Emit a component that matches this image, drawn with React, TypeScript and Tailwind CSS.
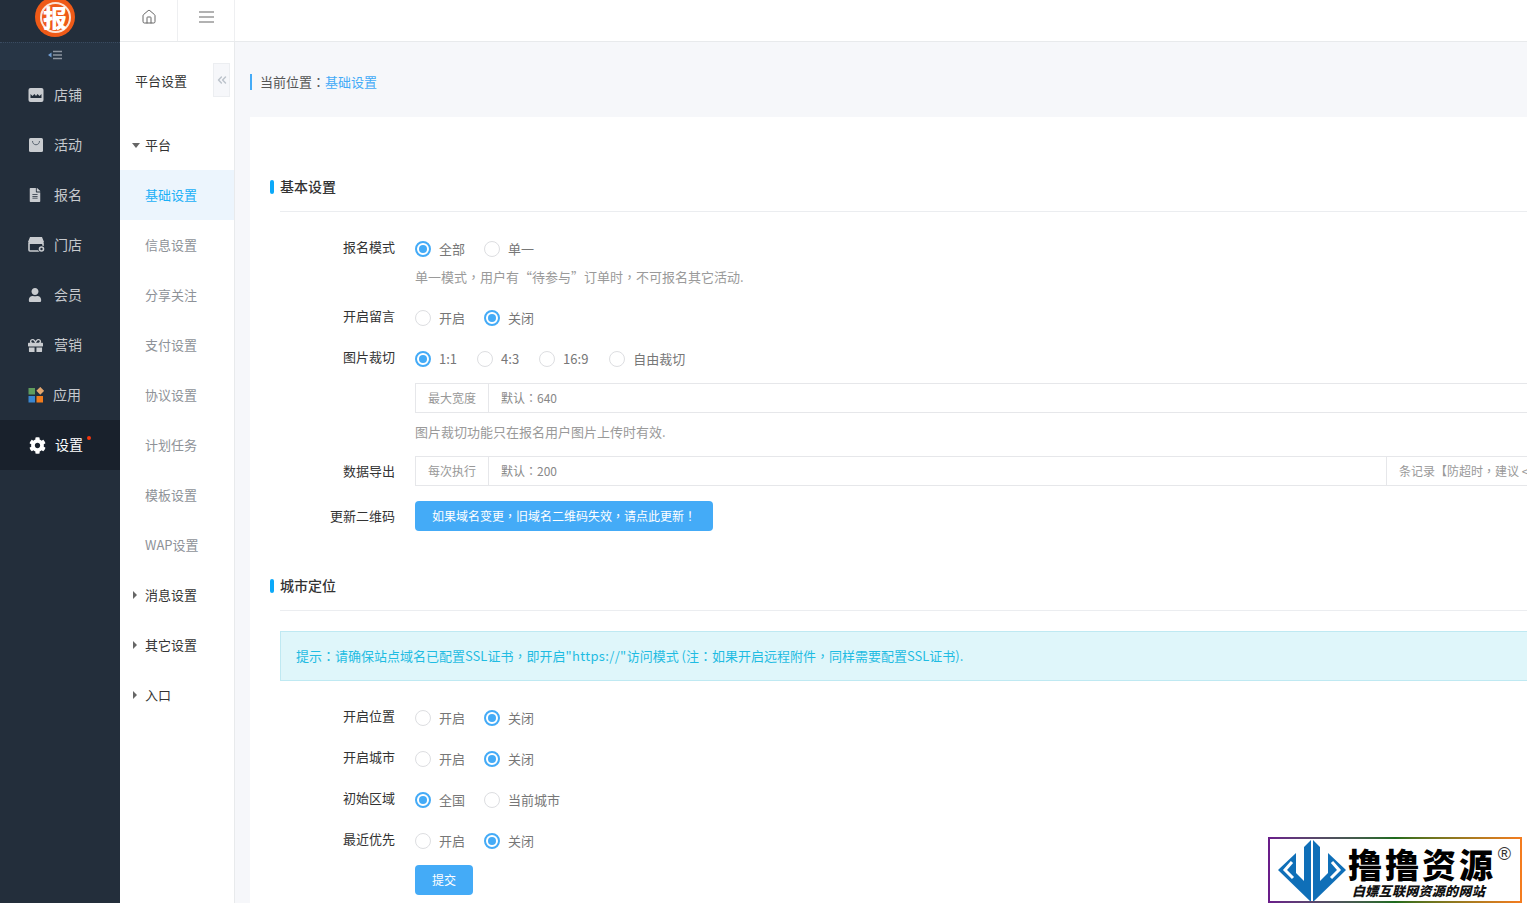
import React from "react";
import { Home, ChevronsLeft } from "lucide-react";
import { FaCog, FaFileAlt, FaUser, FaGift } from "react-icons/fa";

const font = { fontFamily: '"Noto Sans CJK SC","Noto Sans",sans-serif' };

// Full-width punctuation sits in the middle of its cell in the reference.
function T({ children }: { children: string }) {
  return (
    <>
      {children.split(/([，：！])/).map((p, i) =>
        /^[，：！]$/.test(p) ? (
          <span key={i} style={{ fontFamily: '"Noto Sans CJK TC",sans-serif' }}>{p}</span>
        ) : (
          <React.Fragment key={i}>{p}</React.Fragment>
        )
      )}
    </>
  );
}

const ShopIcon = () => (
  <svg width="16" height="14" viewBox="0 0 16 14">
    <rect x="0.5" y="0" width="15" height="14" rx="2" fill="#c9ccd0" />
    <path d="M2.5 6 l2 2 2-2 1.5 2 1.5-2 2 2 2-2 V10 H2.5 Z" fill="#222d3a" />
  </svg>
);
const BagIcon = () => (
  <svg width="16" height="14" viewBox="0 0 16 14">
    <rect x="1" y="0" width="14" height="14" rx="1.5" fill="#c9ccd0" />
    <path d="M4.5 3 C4.5 8 11.5 8 11.5 3" fill="none" stroke="#5a6470" strokeWidth="1" />
  </svg>
);
const StoreIcon = () => (
  <svg width="18" height="16" viewBox="0 0 18 16">
    <path d="M2 0 H14 L16 5 H0 Z" fill="#c9ccd0" />
    <rect x="1" y="5" width="14" height="9" rx="1" fill="none" stroke="#c9ccd0" strokeWidth="1.6" />
    <rect x="1" y="5" width="14" height="2" fill="#c9ccd0" />
    <circle cx="13.5" cy="12" r="3.4" fill="#222d3a" />
    <circle cx="13.5" cy="12" r="2" fill="none" stroke="#c9ccd0" strokeWidth="1.6" />
  </svg>
);
const AppIcon = () => (
  <svg width="16" height="16" viewBox="0 0 16 16">
    <rect x="0.5" y="1" width="6.5" height="6.5" fill="#5f9c5e" />
    <rect x="9.5" y="1" width="5.5" height="5.5" fill="#e3a76f" transform="rotate(45 12.2 3.8)" />
    <rect x="0.5" y="9" width="6.5" height="6.5" fill="#3a86d0" />
    <rect x="8.5" y="9" width="6.5" height="6.5" fill="#f27c1c" />
  </svg>
);

const mainMenu = [
  { t: "店铺", i: <ShopIcon /> },
  { t: "活动", i: <BagIcon /> },
  { t: "报名", i: <FaFileAlt size={14} color="#c9ccd0" /> },
  { t: "门店", i: <StoreIcon /> },
  { t: "会员", i: <FaUser size={14} color="#c9ccd0" /> },
  { t: "营销", i: <FaGift size={15} color="#c9ccd0" /> },
  { t: "应用", i: <AppIcon /> },
];

const subItems = ["信息设置", "分享关注", "支付设置", "协议设置", "计划任务", "模板设置", "WAP设置"];

function Radio({ on, label, cls }: { on?: boolean; label: string; cls?: string }) {
  return (
    <span className={`flex items-center ${cls ?? ""}`}>
      {on ? (
        <span className="flex h-4 w-4 items-center justify-center rounded-full border-2 border-[#44abf7]">
          <span className="h-2 w-2 rounded-full bg-[#44abf7]" />
        </span>
      ) : (
        <span className="h-4 w-4 rounded-full border border-[#dddee1]" />
      )}
      <span className="ml-2 text-[#777]">{label}</span>
    </span>
  );
}

function Row({ label, cls, gap, labelCls, children }: { label?: string; cls?: string; gap?: string; labelCls?: string; children: React.ReactNode }) {
  return (
    <div className={`flex items-center ${cls ?? ""}`}>
      <div className={`w-[145px] shrink-0 text-right text-[#333] ${labelCls ?? "-translate-y-0.5"}`}>{label}</div>
      <div className={`ml-5 flex min-w-0 flex-1 items-center ${gap ?? "gap-[19px]"}`}>{children}</div>
    </div>
  );
}

function Heading({ children, cls }: { children: React.ReactNode; cls?: string }) {
  return (
    <div className={cls}>
      <div className="relative ml-[30px] border-b border-[#ebedf0] pb-[14px]">
        <span className="absolute left-[-10px] top-[3px] h-[14px] w-1 rounded-sm bg-[#0ba9f9]" />
        <div className="h-5 text-sm font-medium leading-[18px] text-[#333]">{children}</div>
      </div>
    </div>
  );
}

function InputGroup({ addon, placeholder, tail, cls }: { addon: string; placeholder: string; tail?: string; cls?: string }) {
  return (
    <Row cls={cls} label={tail ? "数据导出" : ""} labelCls="mt-0">
      <div className="flex h-[30px] flex-1 items-center border border-[#e6e7ea] text-xs text-[#999]">
        <span className="flex h-full w-[73px] shrink-0 items-center justify-center border-r border-[#e6e7ea]">{addon}</span>
        <span className="flex-1 pl-3 text-[#888]"><T>{placeholder}</T></span>
        {tail && <span className="flex h-full w-[363px] shrink-0 items-center border-l border-[#e6e7ea] pl-3"><span className="whitespace-nowrap"><T>{tail}</T></span></span>}
      </div>
    </Row>
  );
}

function Watermark() {
  return (
    <div className="absolute left-[1268px] top-[837px] h-[66px] w-[254px] bg-gradient-to-r from-[#6a1b8a] via-[#1d6b1d] to-[#f57c1f] p-[2px]">
      <div className="relative h-full w-full overflow-hidden bg-white">
        <svg width="90" height="68" viewBox="0 0 90 68" className="absolute left-[-2px] top-[-4px]">
          <g fill="#0f6fb8">
            <path d="M43 5 L36 12 V46 L28 38 V18 L10 35 L43 67 Z" />
            <path d="M45 5 L52 12 V46 L60 38 V18 L78 35 L45 67 Z" />
          </g>
          <g fill="none" stroke="#fff" strokeWidth="3">
            <path d="M24 27 L17 35 L25 43" />
            <path d="M64 27 L71 35 L63 43" />
          </g>
        </svg>
        <div className="absolute left-[78px] top-[8px] whitespace-nowrap text-[34px] font-black leading-[34px] tracking-[3px] text-black">撸撸资源</div>
        <div className="absolute right-[9px] top-[6px] font-['Liberation_Sans'] text-lg leading-[18px] text-[#333]">®</div>
        <div className="absolute left-[82px] top-[44px] whitespace-nowrap text-[13px] font-black italic leading-4 tracking-[0.3px] text-[#111]">白嫖互联网资源的网站</div>
      </div>
    </div>
  );
}

export default function App() {
  return (
    <div className="relative flex h-[903px] w-[1527px] overflow-hidden bg-[#f6f7fa] text-[13px] leading-[22px]" style={font}>
      {/* main sidebar */}
      <aside className="flex w-[120px] shrink-0 flex-col bg-[#232e3b]">
        <div className="flex h-[42px] justify-center overflow-hidden pr-[10px]">
          <div className="-mt-[3px] flex h-10 w-10 items-center justify-center rounded-full bg-[#ef5a17]">
            <div className="flex h-[31px] w-[31px] items-center justify-center rounded-full border-2 border-[#fbe3d6]">
              <span className="text-[24px] font-black leading-none text-white">报</span>
            </div>
          </div>
        </div>
        <div className="flex h-7 items-center justify-center border-t border-dotted border-[#3a4b60] bg-[#273545] pb-1 pr-[10px]">
          <svg width="14" height="10" viewBox="0 0 14 10">
            <path d="M0 5 L3.5 2.5 V7.5 Z" fill="#6f9bd0" />
            <path d="M5 1.5 H14 M5 5 H14 M5 8.5 H14" stroke="#8d95a0" strokeWidth="1.4" />
          </svg>
        </div>
        {mainMenu.map((m) => (
          <div key={m.t} className="flex h-[50px] items-center pl-[28px] text-sm text-[#c6c9cd]">
            <span className={`flex shrink-0 items-center ${m.t === "应用" ? "w-[25px]" : "w-[26px]"}`}>{m.i}</span>
            <span className="mb-0.5">{m.t}</span>
          </div>
        ))}
        <div className="flex h-[50px] items-center bg-[#19212c] pl-[29px] text-sm text-white">
          <span className="flex w-[26px] shrink-0 items-center"><FaCog size={17} color="#fff" /></span>
          <span className="relative mb-0.5">
            设置
            <span className="absolute right-[-8px] top-[2px] h-1 w-1 rounded-full bg-[#f6360e]" />
          </span>
        </div>
      </aside>

      <div className="flex min-w-0 flex-1 flex-col">
        {/* top bar */}
        <header className="flex h-[42px] shrink-0 border-b border-[#e8eaec] bg-white">
          <div className="flex w-[58px] items-center justify-center border-r border-[#eeeff1]">
            <Home size={16} color="#666" strokeWidth={1.5} className="mb-[7px]" />
          </div>
          <div className="flex w-[57px] items-center justify-center border-r border-[#eeeff1]">
            <svg width="15" height="12" viewBox="0 0 15 12" className="mb-2">
              <path d="M0 1 H15 M0 6 H15 M0 11 H15" stroke="#999" strokeWidth="1.6" />
            </svg>
          </div>
        </header>

        <div className="flex min-h-0 flex-1">
          {/* sub sidebar */}
          <nav className="flex w-[115px] shrink-0 flex-col border-r border-[#e8eaec] bg-white">
            <div className="flex h-[78px] items-center justify-between pl-[15px] pr-1">
              <span className="text-[#333]">平台设置</span>
              <span className="mb-[3px] flex h-[34px] w-[17px] items-center justify-center border border-[#eceef1] bg-[#f6f7fa]">
                <ChevronsLeft size={14} color="#bcc3cb" strokeWidth={2.5} />
              </span>
            </div>
            <div className="flex h-[50px] items-center pl-3 text-[#333]">
              <span className="h-0 w-0 border-x-[4px] border-t-[5px] border-x-transparent border-t-[#666]" />
              <span className="ml-[5px]">平台</span>
            </div>
            <div className="flex h-[50px] items-center bg-[#ecf5fd] pl-[25px] text-[#1ab0f7]">基础设置</div>
            {subItems.map((s) => (
              <div key={s} className="flex h-[50px] items-center pl-[25px] text-[#8e9298]">{s}</div>
            ))}
            {["消息设置", "其它设置", "入口"].map((s) => (
              <div key={s} className="flex h-[50px] items-center pl-[13px] text-[#333]">
                <span className="h-0 w-0 border-y-[4px] border-l-[4px] border-y-transparent border-l-[#666]" />
                <span className="ml-2">{s}</span>
              </div>
            ))}
          </nav>

          {/* content */}
          <main className="flex min-w-0 flex-1 flex-col overflow-hidden">
            <div className="ml-[15px] mt-[32px] flex h-4 items-center border-l-2 border-[#44abf7] pl-2 text-[#555]">
              <span><T>当前位置：</T></span>
              <span className="text-[#44abf7]">基础设置</span>
            </div>
            <section className="ml-[15px] mt-[27px] w-[1500px] flex-1 bg-white pt-[60px]">
              <Heading>基本设置</Heading>

              <Row label="报名模式" cls="mt-[26px]">
                <Radio on label="全部" />
                <Radio label="单一" />
              </Row>
              <div className="ml-[165px] mt-[7px] h-5 leading-5 text-[#9a9a9a]"><T>单一模式，用户有“待参与”订单时，不可报名其它活动.</T></div>
              <Row label="开启留言" cls="mt-5">
                <Radio label="开启" />
                <Radio on label="关闭" />
              </Row>
              <Row label="图片裁切" cls="mt-[19px]" gap="gap-5">
                <Radio on label="1:1" />
                <Radio label="4:3" />
                <Radio label="16:9" />
                <Radio label="自由裁切" cls="ml-px" />
              </Row>
              <InputGroup cls="mt-[13px]" addon="最大宽度" placeholder="默认：640" />
              <div className="ml-[165px] mt-[9px] h-5 leading-5 text-[#9a9a9a]">图片裁切功能只在报名用户图片上传时有效.</div>
              <InputGroup cls="mt-[14px]" addon="每次执行" placeholder="默认：200" tail="条记录【防超时，建议 < 500】" />
              <Row label="更新二维码" cls="mt-[15px]" labelCls="mt-0">
                <button className="h-[30px] w-[298px] rounded-sm bg-[#44abf7] text-xs text-white"><T>如果域名变更，旧域名二维码失效，请点此更新！</T></button>
              </Row>

              <Heading cls="mt-[45px]">城市定位</Heading>
              <div className="ml-[30px] mt-5 flex h-[50px] items-center border border-[#bfe9f2] bg-[#dff6fa] pl-[15px] text-[#1fbce2]">
                <span>
                  <T>提示：请确保站点域名已配置SSL证书，即开启</T>
                  <span className="tracking-[0.35px]">"https://"</span>
                  <T>访问模式 (注：如果开启远程附件，同样需要配置SSL证书).</T>
                </span>
              </div>
              <Row label="开启位置" cls="mt-[26px]">
                <Radio label="开启" />
                <Radio on label="关闭" />
              </Row>
              <Row label="开启城市" cls="mt-[19px]">
                <Radio label="开启" />
                <Radio on label="关闭" />
              </Row>
              <Row label="初始区域" cls="mt-[19px]">
                <Radio on label="全国" />
                <Radio label="当前城市" />
              </Row>
              <Row label="最近优先" cls="mt-[19px]">
                <Radio label="开启" />
                <Radio on label="关闭" />
              </Row>
              <Row cls="mt-[13px]" labelCls="mt-0">
                <button className="h-[30px] w-[58px] rounded-sm bg-[#44abf7] text-xs text-white">提交</button>
              </Row>
            </section>
          </main>
        </div>
      </div>
      <Watermark />
    </div>
  );
}
